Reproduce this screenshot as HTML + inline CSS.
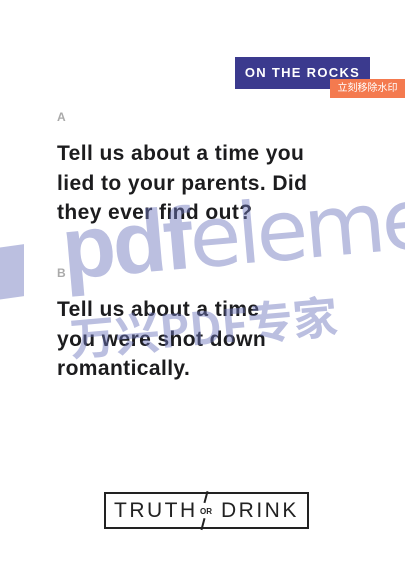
<!DOCTYPE html>
<html><head><meta charset="utf-8"><style>
html,body{margin:0;padding:0;background:#fff;width:405px;height:577px;overflow:hidden;position:relative;font-family:"Liberation Sans","Noto Sans CJK SC",sans-serif}
.badge{position:absolute;left:235px;top:57px;width:135px;height:32px;background:#3b3a8e;color:#fff;font-weight:bold;font-size:13px;letter-spacing:1.3px;line-height:32px;text-align:center}
.wm{position:absolute;left:330px;top:79px;width:75px;height:19px;background:#f47a4f;color:#fff;font-size:10px;line-height:19px;text-align:center}
.lab{position:absolute;left:57px;color:#aaa;font-weight:bold;font-size:12px}
.q{position:absolute;left:57px;color:#1c1c1e;font-weight:bold;font-size:21px;line-height:29.5px;letter-spacing:0.4px}
.water{position:absolute;left:0;top:0;width:405px;height:577px;pointer-events:none;color:rgba(110,120,190,0.47)}
.logo{position:absolute;left:104px;top:492px;width:201px;height:33px;border:2px solid #222;color:#222;font-size:21px;letter-spacing:2.5px;line-height:33px}
</style></head><body>
<div class="badge">ON THE ROCKS</div>
<div class="wm">立刻移除水印</div>
<div class="lab" style="top:110px">A</div>
<div class="q" style="top:139px">Tell us about a time you<br>lied to your parents. Did<br>they ever find out?</div>
<div class="lab" style="top:266px">B</div>
<div class="q" style="top:295px">Tell us about a time<br>you were shot down<br>romantically.</div>
<div class="water">
  <div style="position:absolute;left:-2px;top:246px;width:26px;height:52px;background:rgba(110,120,190,0.47);transform:skewY(-8deg)"></div>
  <div style="position:absolute;left:66px;top:204px;white-space:nowrap;transform:rotate(-5deg);transform-origin:left bottom;font-size:88px;line-height:90px;letter-spacing:-3px"><b>pdf</b><span style="font-weight:normal;font-family:'DejaVu Sans',sans-serif;font-size:84px;letter-spacing:-4px">eleme</span></div>
  <div style="position:absolute;left:72px;top:312px;white-space:nowrap;transform:rotate(-5deg);transform-origin:left bottom;font-size:45px;line-height:50px;font-weight:bold;font-family:'Noto Sans CJK SC',sans-serif">万兴PDF专家</div>
</div>
<div class="logo"><span style="position:absolute;left:8px">TRUTH</span><span style="position:absolute;left:94px;top:1px;font-size:8px;letter-spacing:0;font-weight:bold">OR</span><span style="position:absolute;left:99px;top:-3px;width:1.5px;height:12px;background:#222;transform:rotate(15deg)"></span><span style="position:absolute;left:96px;top:24px;width:1.5px;height:12px;background:#222;transform:rotate(15deg)"></span><span style="position:absolute;left:115px">DRINK</span></div>
</body></html>
